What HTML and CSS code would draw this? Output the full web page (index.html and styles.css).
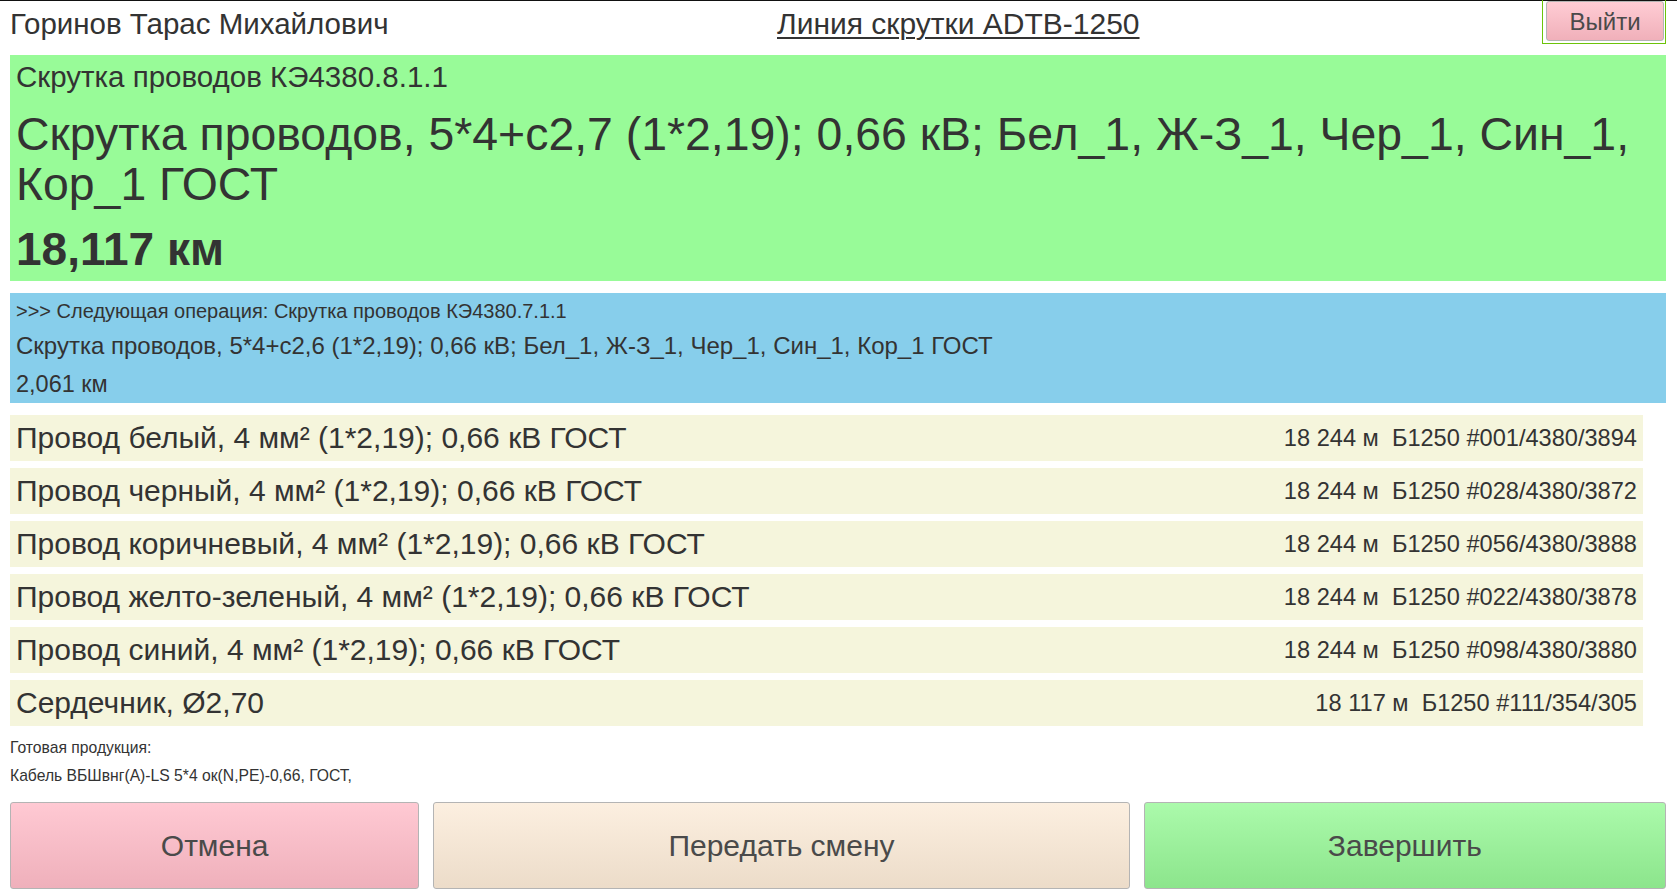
FILE: index.html
```html
<!DOCTYPE html>
<html lang="ru">
<head>
<meta charset="utf-8">
<title>Линия скрутки ADTB-1250</title>
<link rel="stylesheet" href="styles.css">
</head>
<body>
<div class="topline"></div>
<div class="page">
  <header class="header">
    <div class="user">Горинов Тарас Михайлович</div>
    <div class="line-title">Линия скрутки ADTB-1250</div>
    <div class="exit-wrap"><button class="btn btn-exit">Выйти</button></div>
  </header>

  <section class="current">
    <div class="op-code">Скрутка проводов КЭ4380.8.1.1</div>
    <div class="op-name">Скрутка проводов, 5*4+с2,7 (1*2,19); 0,66 кВ; Бел_1, Ж-З_1, Чер_1, Син_1, Кор_1 ГОСТ</div>
    <div class="op-amount">18,117 км</div>
  </section>

  <section class="next">
    <div class="next-code">&gt;&gt;&gt; Следующая операция: Скрутка проводов КЭ4380.7.1.1</div>
    <div class="next-name">Скрутка проводов, 5*4+с2,6 (1*2,19); 0,66 кВ; Бел_1, Ж-З_1, Чер_1, Син_1, Кор_1 ГОСТ</div>
    <div class="next-amount">2,061 км</div>
  </section>

  <section class="materials">
    <div class="mat-row"><span class="mat-name">Провод белый, 4 мм² (1*2,19); 0,66 кВ ГОСТ</span><span class="mat-info">18 244 м&nbsp;&nbsp;Б1250 #001/4380/3894</span></div>
    <div class="mat-row"><span class="mat-name">Провод черный, 4 мм² (1*2,19); 0,66 кВ ГОСТ</span><span class="mat-info">18 244 м&nbsp;&nbsp;Б1250 #028/4380/3872</span></div>
    <div class="mat-row"><span class="mat-name">Провод коричневый, 4 мм² (1*2,19); 0,66 кВ ГОСТ</span><span class="mat-info">18 244 м&nbsp;&nbsp;Б1250 #056/4380/3888</span></div>
    <div class="mat-row"><span class="mat-name">Провод желто-зеленый, 4 мм² (1*2,19); 0,66 кВ ГОСТ</span><span class="mat-info">18 244 м&nbsp;&nbsp;Б1250 #022/4380/3878</span></div>
    <div class="mat-row"><span class="mat-name">Провод синий, 4 мм² (1*2,19); 0,66 кВ ГОСТ</span><span class="mat-info">18 244 м&nbsp;&nbsp;Б1250 #098/4380/3880</span></div>
    <div class="mat-row"><span class="mat-name">Сердечник, Ø2,70</span><span class="mat-info">18 117 м&nbsp;&nbsp;Б1250 #111/354/305</span></div>
  </section>

  <section class="product">
    <div class="product-label">Готовая продукция:</div>
    <div class="product-name">Кабель ВБШвнг(А)-LS 5*4 ок(N,PE)-0,66, ГОСТ,</div>
  </section>

  <footer class="actions">
    <button class="btn btn-cancel">Отмена</button>
    <button class="btn btn-transfer">Передать смену</button>
    <button class="btn btn-finish">Завершить</button>
  </footer>
</div>
</body>
</html>
```

FILE: styles.css
```css
* { box-sizing: border-box; }
html, body {
  margin: 0;
  padding: 0;
  background: #ffffff;
  font-family: "Liberation Sans", Arial, sans-serif;
  color: #333333;
}
.topline {
  height: 1px;
  background: #111111;
}
.page {
  padding: 0 11px 0 10px;
}
.header {
  display: grid;
  grid-template-columns: 767px auto 1fr;
  align-items: start;
  height: 54px;
}
.user {
  font-size: 29.5px;
  line-height: 34px;
  padding-top: 6px;
}
.line-title {
  font-size: 30px;
  line-height: 34px;
  padding-top: 6px;
  text-decoration: underline;
  text-underline-offset: 3px;
  text-decoration-thickness: 2px;
}
.exit-wrap {
  justify-self: end;
  border: 1px solid #6cc30a;
  border-top: none;
  padding: 1px 1px 2px 3px;
  margin-top: -1px;
}
.btn {
  font-family: "Liberation Sans", Arial, sans-serif;
  color: #4a4a4a;
  border: 1px solid #b4b4b4;
  border-radius: 3px;
  cursor: pointer;
}
.btn-exit {
  display: block;
  width: 118px;
  height: 40px;
  padding-top: 2px;
  font-size: 24px;
  background: linear-gradient(#ffccd4, #f0b0ba);
}
.current {
  background: #98fb98;
  padding: 4px 8px 8px 6px;
  height: 226px;
}
.op-code {
  font-size: 29.5px;
  line-height: 36px;
}
.op-name {
  font-size: 46.4px;
  line-height: 50px;
  margin-top: 14px;
}
.op-amount {
  font-size: 46px;
  font-weight: bold;
  line-height: 56px;
  margin-top: 12px;
}
.next {
  background: #87ceeb;
  margin-top: 12px;
  padding: 4px 6px 6px 6px;
  height: 110px;
}
.next-code {
  font-size: 20px;
  line-height: 28px;
}
.next-name {
  font-size: 24px;
  line-height: 42px;
}
.next-amount {
  font-size: 23.5px;
  line-height: 34px;
}
.materials {
  display: flex;
  flex-direction: column;
  gap: 7px;
  margin-top: 12px;
  margin-right: 23px;
}
.mat-row {
  display: flex;
  justify-content: space-between;
  align-items: center;
  background: #f5f5dc;
  height: 46px;
  padding: 0 6px;
}
.mat-name {
  font-size: 30px;
}
.mat-info {
  font-size: 23.6px;
}
.product {
  padding-top: 8px;
  font-size: 15.7px;
  line-height: 28px;
}
.actions {
  display: grid;
  grid-template-columns: 409fr 696fr 522fr;
  gap: 14px;
  margin-top: 12px;
}
.actions .btn {
  height: 87px;
  font-size: 30px;
}
.btn-cancel {
  background: linear-gradient(#ffc9d3, #efb0bb);
}
.btn-transfer {
  background: linear-gradient(#fcefe0, #ecdcc9);
}
.btn-finish {
  background: linear-gradient(#abfaab, #8ce58c);
}
```
